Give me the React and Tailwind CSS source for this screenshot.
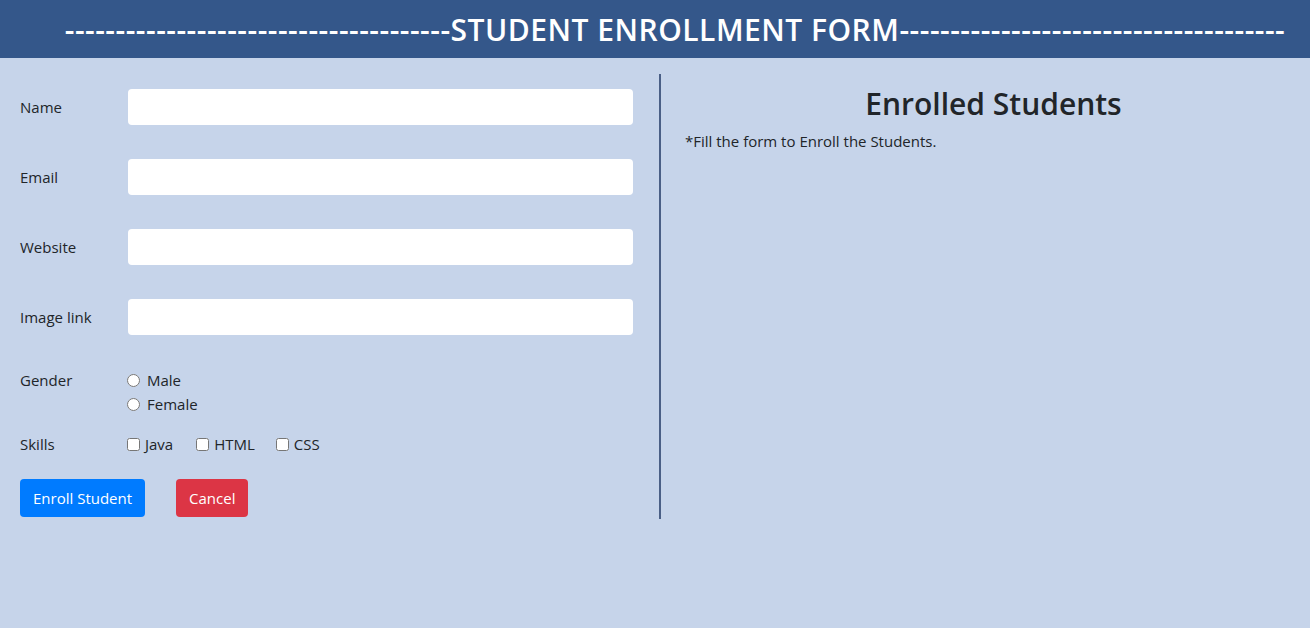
import React from "react";

const DASHES = "--------------------------------------";

function Field({ label }) {
  return (
    <div className="flex items-center">
      <label className="w-[108px] shrink-0">{label}</label>
      <input
        type="text"
        className="h-9 flex-1 rounded bg-white px-3 outline-none"
      />
    </div>
  );
}

export default function App() {
  return (
    <div
      className="min-h-screen bg-[#c6d4ea] text-[#212529] text-[15px]"
      style={{ fontFamily: '"Open Sans", sans-serif' }}
    >
      <header className="h-[58px] bg-[#34578a] flex items-center justify-center">
        <h1 className="text-[30px] font-semibold text-white tracking-[0.5px] ml-[40px] whitespace-nowrap">
          {DASHES}STUDENT ENROLLMENT FORM{DASHES}
        </h1>
      </header>

      <main className="flex pt-4">
        <section className="w-[661px] shrink-0 border-r-2 border-[#4a5f86] pl-5 pr-[26px] pt-[15px] pb-[2px]">
          <div className="flex flex-col gap-[34px]">
            <Field label="Name" />
            <Field label="Email" />
            <Field label="Website" />
            <Field label="Image link" />
          </div>

          <div className="flex mt-[34px] leading-6 -translate-y-px">
            <span className="w-[107px] shrink-0">Gender</span>
            <div className="flex flex-col">
              <label className="flex items-center gap-[7px]">
                <input type="radio" name="gender" className="w-[13px] h-[13px] m-0" />
                Male
              </label>
              <label className="flex items-center gap-[7px]">
                <input type="radio" name="gender" className="w-[13px] h-[13px] m-0" />
                Female
              </label>
            </div>
          </div>

          <div className="flex mt-[15px] leading-6">
            <span className="w-[107px] shrink-0">Skills</span>
            <label className="flex items-center gap-[5px] mr-[23px]">
              <input type="checkbox" className="w-[13px] h-[13px] m-0" />
              Java
            </label>
            <label className="flex items-center gap-[5px] mr-[21px]">
              <input type="checkbox" className="w-[13px] h-[13px] m-0" />
              HTML
            </label>
            <label className="flex items-center gap-[5px]">
              <input type="checkbox" className="w-[13px] h-[13px] m-0" />
              CSS
            </label>
          </div>

          <div className="flex gap-[31px] mt-[23px]">
            <button className="h-[38px] px-[13px] rounded bg-[#007bff] text-white">
              Enroll Student
            </button>
            <button className="h-[38px] px-[13px] rounded bg-[#dc3545] text-white">
              Cancel
            </button>
          </div>
        </section>

        <section className="flex-1 pl-6 pr-2 pt-[10px]">
          <h2 className="text-center text-[30px] font-semibold leading-10">
            Enrolled Students
          </h2>
          <p className="mt-[7px] -translate-y-px">*Fill the form to Enroll the Students.</p>
        </section>
      </main>
    </div>
  );
}
